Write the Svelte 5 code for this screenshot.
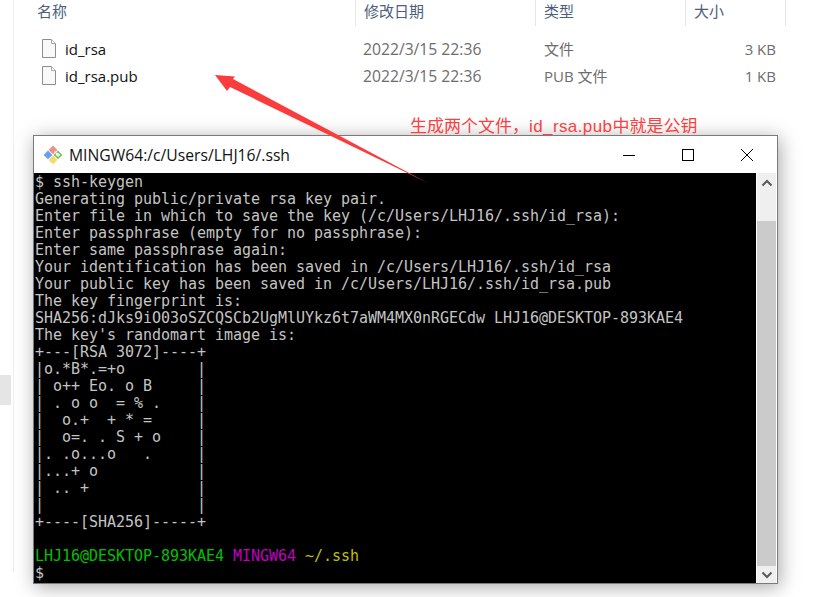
<script>
  const cols = ['名称', '修改日期', '类型', '大小'];
  const files = [
    { name: 'id_rsa', date: '2022/3/15 22:36', type: '文件', size: '3 KB' },
    { name: 'id_rsa.pub', date: '2022/3/15 22:36', type: 'PUB 文件', size: '1 KB' }
  ];
  const lines = [
    '$ ssh-keygen',
    'Generating public/private rsa key pair.',
    'Enter file in which to save the key (/c/Users/LHJ16/.ssh/id_rsa):',
    'Enter passphrase (empty for no passphrase):',
    'Enter same passphrase again:',
    'Your identification has been saved in /c/Users/LHJ16/.ssh/id_rsa',
    'Your public key has been saved in /c/Users/LHJ16/.ssh/id_rsa.pub',
    'The key fingerprint is:',
    'SHA256:dJks9iO03oSZCQSCb2UgMlUYkz6t7aWM4MX0nRGECdw LHJ16@DESKTOP-893KAE4',
    "The key's randomart image is:",
    '+---[RSA 3072]----+',
    '|o.*B*.=+o        |',
    '| o++ Eo. o B     |',
    '| . o o  = % .    |',
    '|  o.+  + * =     |',
    '|  o=. . S + o    |',
    '|. .o...o   .     |',
    '|...+ o           |',
    '| .. +            |',
    '|                 |',
    '+----[SHA256]-----+',
    ''
  ];
</script>

<div class="page">
  <aside class="strip"><div class="selected"></div></aside>
  <main class="explorer">
    <div class="head">
      {#each cols as c}<div class="hcell">{c}</div>{/each}
    </div>
    <div class="rows">
      {#each files as f}
        <div class="row">
          <div class="name">
            <svg class="ficon" width="16" height="19" viewBox="0 0 16 19">
              <path d="M1.5 .5H10.5L14.5 4.5V18.5H1.5Z" fill="#f7f9fa" stroke="#8d8d8d" />
              <path d="M10.5 .5V4.5H14.5" fill="#fff" stroke="#a8a8a8" />
            </svg>
            <span>{f.name}</span>
          </div>
          <div class="meta date">{f.date}</div>
          <div class="meta">{f.type}</div>
          <div class="meta size">{f.size}</div>
        </div>
      {/each}
    </div>
    <div class="note">生成两个文件，<span class="latin">id_rsa.pub</span>中就是公钥</div>
    <section class="win">
      <header class="title">
        <svg class="logo" width="20" height="20" viewBox="0 0 20 20">
          <path d="M10 .5L14.4 4.9L10 9.3L5.6 4.9Z" fill="#ef8f8c" />
          <path d="M5 5.5L9.4 9.9L5 14.3L.6 9.9Z" fill="#6b9ff0" />
          <path d="M15 5.5L19.4 9.9L15 14.3L10.6 9.9Z" fill="#7cc25a" />
          <path d="M10 10.5L14.4 14.9L10 19.3L5.6 14.9Z" fill="#f5dc6a" />
          <path d="M11.5 6.5L15 9.9M13 9.9H17M15 8V11.8" stroke="#fff" stroke-width="1.2" />
        </svg>
        <span class="ttext">MINGW64:/c/Users/LHJ16/.ssh</span>
        <div class="ctrls">
          <svg width="14" height="14" viewBox="0 0 14 14"><path d="M1 7.5H13" stroke="#000" /></svg>
          <svg width="14" height="14" viewBox="0 0 14 14"><rect x="1.5" y="1.5" width="11" height="11" fill="none" stroke="#000" /></svg>
          <svg width="14" height="14" viewBox="0 0 14 14"><path d="M1 1L13 13M13 1L1 13" stroke="#000" /></svg>
        </div>
      </header>
      <div class="body">
        <pre class="term">{#each lines as l}<div class="ln">{l || ' '}</div>{/each}<div class="ln"><span class="g">LHJ16@DESKTOP-893KAE4</span> <span class="m">MINGW64</span> <span class="y">~/.ssh</span></div><div class="ln">$</div></pre>
        <div class="scroll">
          <div class="sbtn">
            <svg width="12" height="8" viewBox="0 0 12 8"><path d="M1.5 6.5L6 2L10.5 6.5" fill="none" stroke="#5a5a5a" stroke-width="2" /></svg>
          </div>
          <div class="thumb"></div>
          <div class="sbtn">
            <svg width="12" height="8" viewBox="0 0 12 8"><path d="M1.5 1.5L6 6L10.5 1.5" fill="none" stroke="#5a5a5a" stroke-width="2" /></svg>
          </div>
        </div>
      </div>
    </section>
  </main>
  <svg class="arrow" width="821" height="597" viewBox="0 0 821 597">
    <path d="M215 75L235 76.5L233 79L428 183L230 87L227 91Z" fill="#fa3c3c" />
  </svg>
</div>

<style>
  :global(body) { margin: 0; background: #fff; }
  .page {
    position: relative;
    display: flex;
    width: 821px;
    height: 597px;
    overflow: hidden;
    background: #fff;
    font-family: "Noto Sans CJK SC", "Open Sans", sans-serif;
  }
  .strip { width: 13px; flex: none; }
  .selected { width: 11px; height: 30px; margin-top: 375px; background: #e5e5e5; }
  .explorer {
    flex: 1;
    height: 572px;
    border-left: 1px solid #f0f0f0;
    box-sizing: content-box;
  }
  .head {
    display: grid;
    grid-template-columns: 342px 180px 150px 100px;
    height: 26px;
  }
  .hcell {
    padding-left: 8px;
    font-size: 15px;
    line-height: 22px;
    color: #4c607a;
    border-right: 1px solid #e5e5e5;
  }
  .hcell:first-child { padding-left: 23px; }
  .rows { padding-top: 9px; }
  .row {
    display: grid;
    grid-template-columns: 342px 180px 150px 90px;
    height: 27px;
    align-items: center;
    font-family: "Open Sans", "Noto Sans CJK SC", sans-serif;
  }
  .name { display: flex; align-items: center; padding-left: 27px; color: #111; font-size: 15px; }
  .ficon { margin-right: 8px; flex: none; }
  .meta { padding-left: 8px; color: #6d6d6d; font-size: 15px; }
  .date { font-size: 15.7px; padding-left: 7px; }
  .size { text-align: right; padding-left: 0; }
  .note {
    position: relative;
    z-index: 1;
    height: 20px;
    margin-left: 396px;
    margin-top: 26px;
    font-family: "Liberation Sans", "Noto Sans CJK SC", sans-serif;
    font-size: 17px;
    line-height: 24px;
    color: #fa4040;
    white-space: nowrap;
  }
  .latin { letter-spacing: .4px; }
  .win {
    width: 743px;
    height: 447px;
    margin-left: 19px;
    border: 1px solid #7a7a7a;
    background: #fff;
    box-shadow: 2px 3px 18px rgba(0, 0, 0, .35);
    position: relative;
    display: flex;
    flex-direction: column;
  }
  .title {
    height: 37px;
    flex: none;
    display: flex;
    align-items: center;
    padding-left: 9px;
    background: #fff;
  }
  .logo { margin-right: 6px; }
  .ttext {
    font-family: "Open Sans", sans-serif;
    font-size: 15.7px;
    color: #111;
    white-space: nowrap;
  }
  .ctrls {
    margin-left: auto;
    display: flex;
    gap: 45px;
    padding-right: 23px;
  }
  .body { flex: 1; display: flex; min-height: 0; background: #fff; }
  .term {
    flex: none;
    width: 722px;
    margin: 0;
    padding: 1px 0 0 1px;
    box-sizing: border-box;
    background: #000;
    color: #c4c4c4;
    font-family: "DejaVu Sans Mono", monospace;
    font-size: 15px;
    line-height: 17px;
    letter-spacing: -.03px;
    overflow: hidden;
  }
  .ln { height: 17px; white-space: pre; }
  .g { color: #00c000; }
  .m { color: #c000c0; }
  .y { color: #c0c000; }
  .scroll {
    width: 19px;
    margin-left: 1px;
    display: flex;
    flex-direction: column;
    background: #efefef;
  }
  .sbtn { height: 17px; display: flex; align-items: center; justify-content: center; flex: none; }
  .scroll .sbtn:first-child { height: 48px; align-items: flex-start; padding-top: 6px; box-sizing: border-box; }
  .thumb { flex: 1; background: #cbcbcb; }
  .arrow { position: absolute; left: 0; top: 0; pointer-events: none; }
</style>
